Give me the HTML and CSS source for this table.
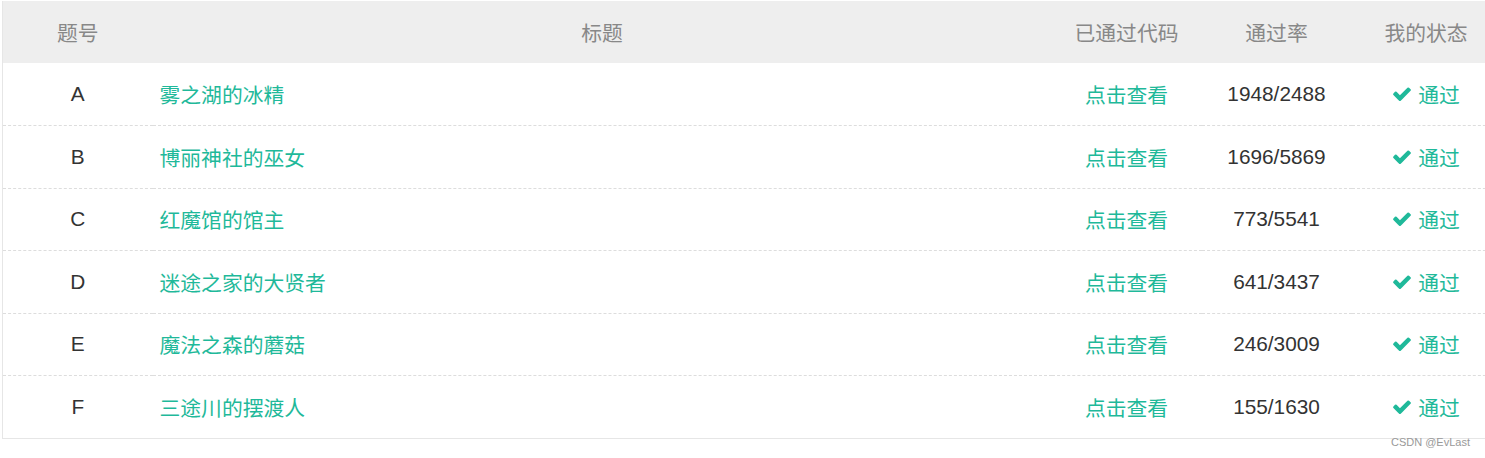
FILE: index.html
```html
<!DOCTYPE html>
<html lang="zh">
<head>
<meta charset="utf-8">
<title>题目列表</title>
<link rel="stylesheet" href="styles.css">
</head>
<body>
<div class="wrap">
  <table class="problems">
    <colgroup>
      <col class="c-id"><col class="c-title"><col class="c-code"><col class="c-rate"><col class="c-status">
    </colgroup>
    <thead>
      <tr><th>题号</th><th>标题</th><th>已通过代码</th><th>通过率</th><th>我的状态</th></tr>
    </thead>
    <tbody>
      <tr><td class="id">A</td><td class="title"><a>雾之湖的冰精</a></td><td><a>点击查看</a></td><td class="rate">1948/2488</td><td class="status"><span class="ok"><svg viewBox="121 300 1550 1220"><path d="M1671 566q0 40-28 68l-724 724-136 136q-28 28-68 28t-68-28l-136-136-362-362q-28-28-28-68t28-68l136-136q28-28 68-28t68 28l294 295 656-657q28-28 68-28t68 28l136 136q28 28 28 68z"/></svg>通过</span></td></tr>
      <tr><td class="id">B</td><td class="title"><a>博丽神社的巫女</a></td><td><a>点击查看</a></td><td class="rate">1696/5869</td><td class="status"><span class="ok"><svg viewBox="121 300 1550 1220"><path d="M1671 566q0 40-28 68l-724 724-136 136q-28 28-68 28t-68-28l-136-136-362-362q-28-28-28-68t28-68l136-136q28-28 68-28t68 28l294 295 656-657q28-28 68-28t68 28l136 136q28 28 28 68z"/></svg>通过</span></td></tr>
      <tr><td class="id">C</td><td class="title"><a>红魔馆的馆主</a></td><td><a>点击查看</a></td><td class="rate">773/5541</td><td class="status"><span class="ok"><svg viewBox="121 300 1550 1220"><path d="M1671 566q0 40-28 68l-724 724-136 136q-28 28-68 28t-68-28l-136-136-362-362q-28-28-28-68t28-68l136-136q28-28 68-28t68 28l294 295 656-657q28-28 68-28t68 28l136 136q28 28 28 68z"/></svg>通过</span></td></tr>
      <tr><td class="id">D</td><td class="title"><a>迷途之家的大贤者</a></td><td><a>点击查看</a></td><td class="rate">641/3437</td><td class="status"><span class="ok"><svg viewBox="121 300 1550 1220"><path d="M1671 566q0 40-28 68l-724 724-136 136q-28 28-68 28t-68-28l-136-136-362-362q-28-28-28-68t28-68l136-136q28-28 68-28t68 28l294 295 656-657q28-28 68-28t68 28l136 136q28 28 28 68z"/></svg>通过</span></td></tr>
      <tr><td class="id">E</td><td class="title"><a>魔法之森的蘑菇</a></td><td><a>点击查看</a></td><td class="rate">246/3009</td><td class="status"><span class="ok"><svg viewBox="121 300 1550 1220"><path d="M1671 566q0 40-28 68l-724 724-136 136q-28 28-68 28t-68-28l-136-136-362-362q-28-28-28-68t28-68l136-136q28-28 68-28t68 28l294 295 656-657q28-28 68-28t68 28l136 136q28 28 28 68z"/></svg>通过</span></td></tr>
      <tr><td class="id">F</td><td class="title"><a>三途川的摆渡人</a></td><td><a>点击查看</a></td><td class="rate">155/1630</td><td class="status"><span class="ok"><svg viewBox="121 300 1550 1220"><path d="M1671 566q0 40-28 68l-724 724-136 136q-28 28-68 28t-68-28l-136-136-362-362q-28-28-28-68t28-68l136-136q28-28 68-28t68 28l294 295 656-657q28-28 68-28t68 28l136 136q28 28 28 68z"/></svg>通过</span></td></tr>
    </tbody>
  </table>
  <div class="watermark">CSDN @EvLast</div>
</div>
</body>
</html>
```

FILE: styles.css
```css
html, body {
  margin: 0;
  padding: 0;
  overflow: hidden;
  background: #fff;
}
body {
  font-family: "Liberation Sans", "Noto Sans CJK SC", Arial, sans-serif;
  font-size: 20.8px;
  color: #333;
}
.wrap {
  position: relative;
  width: 1485px;
  height: 458px;
  padding: 1px 0 0 2px;
  box-sizing: border-box;
  overflow: hidden;
}
.problems {
  border-collapse: collapse;
  table-layout: fixed;
  width: 1498px;
  border-left: 1px solid #e6e6e6;
  border-bottom: 1px solid #e6e6e6;
}
.c-id { width: 150px; }
.c-title { width: 899px; }
.c-code { width: 150px; }
.c-rate { width: 150px; }
.c-status { width: 149px; }
thead th {
  background: #eeeeee;
  color: #888;
  font-weight: normal;
  height: 62px;
  padding: 0;
  text-align: center;
  vertical-align: middle;
}
tbody td {
  height: 61.5px;
  padding: 0;
  text-align: center;
  vertical-align: middle;
  border-top: 1px dashed #dddddd;
}
tbody tr:first-child td { border-top: none; height: 62px; }
tbody td.title { text-align: left; padding-left: 7px; }
a { color: #1fb99a; text-decoration: none; }
.rate { color: #333; }
.ok {
  color: #1fb99a;
  display: inline-flex;
  align-items: center;
  gap: 7px;
  margin-left: 1px;
}
.ok svg {
  width: 18px;
  height: 14px;
  fill: #1fb99a;
}
.watermark {
  position: absolute;
  right: 15px;
  top: 436px;
  font-size: 11px;
  color: #999;
  font-family: "Liberation Sans", Arial, sans-serif;
}
```
